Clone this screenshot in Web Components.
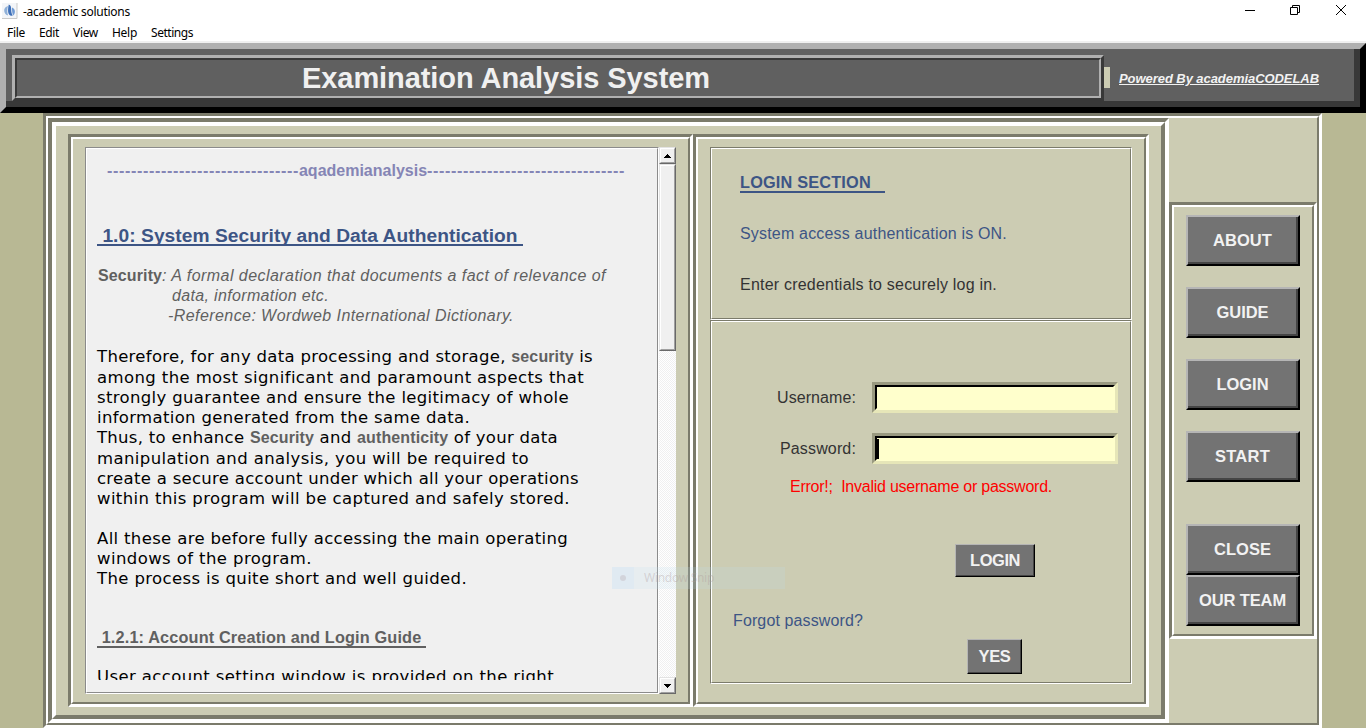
<!DOCTYPE html>
<html lang="en">
<head>
<meta charset="utf-8">
<title>-academic solutions</title>
<style>
html,body{margin:0;height:728px;overflow:hidden;background:#b8b894}
body{font-family:"Liberation Sans",Arial,sans-serif}
</style>
</head>
<body>
<exam-app></exam-app>
<script>
const define = (name, html, setup) => customElements.define(name, class extends HTMLElement {
  constructor() {
    super();
    const t = document.createElement('template');
    t.innerHTML = html;
    this.attachShadow({mode: 'open'}).appendChild(t.content.cloneNode(true));
  }
  connectedCallback() { if (setup) setup(this); }
});

/* One line of text; "w" is its width in pixels, reached through letter spacing. */
define('text-line', `<style>
:host{display:block;height:20px;line-height:var(--lh,22px);white-space:pre}
span{display:inline-block;height:100%}
:host([underline]) span{height:auto;line-height:normal;position:relative;top:1px;border-bottom:2px solid;line-height:17px}
</style><span><slot></slot></span>`, el => {
  const w = +el.getAttribute('w');
  if (!w) return;
  const s = el.shadowRoot.querySelector('span');
  const n = el.textContent.length;
  let ls = 0;
  for (let k = 0; k < 5; k++) {
    ls += (w - s.getBoundingClientRect().width) / n;
    s.style.letterSpacing = ls + 'px';
  }
});

/* Etched frame: a dark line, then a white one. */
define('groove-frame', `<style>
:host{display:block;box-sizing:border-box;--o:3px;--i:2px;--d:#7b7b6b;--l:#fff}
.o,.i{box-sizing:border-box;height:100%;border-style:solid}
.o{border-width:var(--o);border-color:var(--d) var(--l) var(--l) var(--d)}
.i{border-width:var(--i);border-color:var(--l) var(--d) var(--d) var(--l);background:var(--fill,#ccccb3)}
</style><div class="o"><div class="i"><slot></slot></div></div>`);

define('raised-button', `<style>
:host{display:block;box-sizing:border-box;--b:2px;--lh:20px}
.o,button{box-sizing:border-box;height:100%;border-style:solid}
.o{border-width:var(--b);border-color:#b5b5b5 #000 #000 #b5b5b5}
button{display:block;width:100%;padding:0 0 0 1px;border-width:0 var(--b) var(--b) 0;border-color:#454545;background:#737373;color:#f2f2f2;font:bold 16.500px "Liberation Sans",Arial,sans-serif}
</style><div class="o"><button><slot></slot></button></div>`);

define('title-bar', `<style>
:host{display:block;height:43px;box-sizing:border-box;background:#fff;border-bottom:2px solid #f0f0f0;font:12px "Noto Sans",sans-serif;color:#000}
.top{display:flex;height:23px;align-items:center}
.top text-line{line-height:20px}
.top svg.app{margin:0 5px 0 2px}
.win{margin-left:auto;margin-right:19px;display:flex;gap:34px;height:21px;align-items:center;padding-bottom:3px}
.menu{display:flex;padding-left:7px;height:18px;line-height:18px}
.menu text-line{height:18px;line-height:19px}
</style>
<div class="top"><svg class="app" width="16" height="17" viewBox="0 0 16 17"><path d="M0 0h15v15H0z" fill="#f3f5f8"/><path d="M15 0v15.500H0" fill="none" stroke="#c9c9c9"/><path d="M6 3C3.500 3.500 2 5.500 2.200 8c.2 2.300 1.800 4 4 4.500C5 10 5 6 6 3z" fill="#8fb0d8"/><path d="M6.800 1.500c2 .7 2.400 2.500 2.400 5 0 2.500.5 4.500 1.500 6-2.500 1-4.400-1-4.600-4-.1-2.500.2-5 .7-7z" fill="#3f70b8"/><path d="M10 4.500c2 .8 3 2.500 2.900 4.500-.1 1.500-.8 2.800-1.700 3.500-1-2-1.300-5-1.200-8z" fill="#6f9ad4"/></svg>
<text-line w="107">-academic solutions</text-line>
<div class="win"><svg width="12" height="12"><path d="M2 6.500h10" stroke="#000"/></svg><svg width="12" height="12"><path d="M1.500 3.500h7v7h-7zM3.500 3V1.500h7v7H9" fill="none" stroke="#000"/></svg><svg width="12" height="12"><path d="M1 1l10 10M11 1L1 11" stroke="#000"/></svg></div></div>
<div class="menu"><text-line w="18" style="margin-right:14px">File</text-line><text-line w="20" style="margin-right:14px">Edit</text-line><text-line w="25" style="margin-right:14px">View</text-line><text-line w="25" style="margin-right:14px">Help</text-line><text-line w="42">Settings</text-line></div>`);

define('app-header', `<style>
:host{display:block;height:70px}
.o,.i{box-sizing:border-box;border-style:solid}
.o{height:70px;border-width:6px;border-color:#b0b0b0 #000 #000 #b0b0b0}
.i{height:58px;border-width:0 6px 6px 0;border-color:#383838;background:#606060;display:flex}
groove-frame{--d:#b0b0b0;--l:#383838;--fill:#606060;width:1092px;height:46px;margin:6px 0 0 6px;flex:none}
h1{margin:0;padding-left:285px;font-size:29px;color:#f0f0f0}
h1 text-line{height:36px;line-height:36px}
.chip{width:6px;height:21px;margin-top:18px;background:#ccccb3}
.by{margin:20px 0 0 9px;font:italic bold 13px "Liberation Sans",Arial,sans-serif;color:#f2f2f2;text-decoration:underline}
.by text-line{height:19px;line-height:19px}
</style><div class="o"><div class="i"><groove-frame><h1><text-line w="408">Examination Analysis System</text-line></h1></groove-frame><div class="chip"></div><div class="by"><text-line w="200"><u>Powered By academiaCODELAB</u></text-line></div></div></div>`);

define('scroll-rail', `<style>
:host{display:flex;flex-direction:column;width:17px;height:547px;background:repeating-conic-gradient(#fff 0 25%,#f0f0f0 0 50%) 0 0/2px 2px}
.b{box-sizing:border-box;border:1px solid;border-color:#e3e3e3 #696969 #696969 #e3e3e3;height:17px;flex:none}
.b>div{box-sizing:border-box;height:100%;border:1px solid;border-color:#fff #a0a0a0 #a0a0a0 #fff;background:#f0f0f0;display:flex;align-items:center;justify-content:center}
.thumb{height:187px}.down{margin-top:auto}
svg{display:block}
</style><div class="b"><div><svg width="7" height="4" shape-rendering="crispEdges"><path d="M3 0h1v1h1v1h1v1h1v1H0V3h1V2h1V1h1z"/></svg></div></div><div class="b thumb"><div></div></div><div class="b down"><div><svg width="7" height="4" shape-rendering="crispEdges"><path d="M0 0h7v1H6v1H5v1H4v1H3V3H2V2H1V1H0z"/></svg></div></div>`);

define('guide-reader', `<style>
:host{display:flex;padding:8px 0 0 12px}
groove-frame{--o:1px;--i:1px;--d:#8b8b8b;--fill:#f0f0f0;width:574px;height:547px}
.t{height:531px;overflow:hidden;padding-left:10px;font-size:16px}
.v{font:16.500px "DejaVu Sans",Verdana,sans-serif;color:#000}
b{font:bold 16px "Liberation Sans",Arial,sans-serif;color:#606060;letter-spacing:.12px}
i{font-style:normal;letter-spacing:0}
.it{color:#606060;font-style:italic}.it b{font-style:normal}
.p{margin-top:20px}.g{margin-top:1px}
</style><groove-frame><div class="t">
<text-line w="518" style="margin:11px 0 0 10px;color:#8585b5;font-weight:bold">--------------------------------<i>aqademianalysis</i>---------------------------------</text-line>
<text-line underline w="426" style="margin-top:44px;margin-bottom:21px;color:#3d5585;font-weight:bold;font-size:19.200px"> 1.0: System Security and Data Authentication </text-line>
<div class="it"><text-line w="508" style="margin-left:1px"><b>Security</b>: A formal declaration that documents a fact of relevance of</text-line>
<text-line w="157" style="margin-left:75px">data, information etc.</text-line>
<text-line w="346" style="margin-left:71px">-Reference: Wordweb International Dictionary.</text-line></div>
<div class="v" style="margin-top:21px"><text-line w="496">Therefore, for any data processing and storage, <b>security</b> is</text-line>
<text-line class="g" w="487">among the most significant and paramount aspects that</text-line>
<text-line w="472">strongly guarantee and ensure the legitimacy of whole</text-line>
<text-line w="373">information generated from the same data.</text-line>
<text-line w="461">Thus, to enhance <b>Security</b> and <b>authenticity</b> of your data</text-line>
<text-line class="g" w="432">manipulation and analysis, you will be required to</text-line>
<text-line w="482">create a secure account under which all your operations</text-line>
<text-line w="473">within this program will be captured and safely stored.</text-line>
<text-line class="p" w="471">All these are before fully accessing the main operating</text-line>
<text-line w="215">windows of the program.</text-line>
<text-line w="370">The process is quite short and well guided.</text-line></div>
<text-line underline w="329" style="margin-top:37px;color:#606060;font-weight:bold;font-size:16.300px"> 1.2.1: Account Creation and Login Guide </text-line>
<text-line class="v" w="457" style="margin-top:22px">User account setting window is provided on the right</text-line>
</div></groove-frame><scroll-rail></scroll-rail>`);

define('entry-field', `<style>
:host{display:block;width:246px;height:31px}
.o,input{box-sizing:border-box;border-style:solid}
.o{height:31px;border-width:3px;border-color:#999980 #e6e6b8 #e6e6b8 #999980;background:#ffffcc}
.k{box-sizing:border-box;height:25px;border:2px solid;border-color:#000 #ffc #ffc #000;display:flex;padding-top:1px}
input{width:100%;height:20px;border:0;background:none;outline:0;padding:0}
:host([caret]) input{border-left:2px solid #000}
</style><div class="o"><div class="k"><input aria-label="entry"></div></div>`);

define('login-panel', `<style>
:host{display:block;padding:8px 12px 0;font-size:16px;color:#333}
groove-frame{--o:1px;--i:1px;width:422px}
.a{height:173px}.b{height:364px}
.c{padding:21px 0 0 28px}
.blue{color:#3d5585}
.row{display:flex;justify-content:flex-end;padding-right:12px}
.row text-line{margin:5px 16px 0 0}
.err{color:#f00;margin:12px 0 0 78px}
raised-button{--b:1px}
</style><groove-frame class="a"><div class="c">
<text-line underline w="145" class="blue" style="font-weight:bold;font-size:16.300px">LOGIN SECTION   </text-line>
<text-line w="267" class="blue" style="margin-top:33px">System access authentication is ON.</text-line>
<text-line w="257" style="margin-top:31px">Enter credentials to securely log in.</text-line></div></groove-frame>
<groove-frame class="b"><div class="row" style="padding-top:60px"><text-line w="79">Username:</text-line><entry-field></entry-field></div>
<div class="row" style="padding-top:20px"><text-line w="76">Password:</text-line><entry-field caret></entry-field></div>
<text-line class="err" w="262">Error!;  Invalid username or password.</text-line>
<raised-button style="width:80px;height:33px;margin:48px 0 0 243px"><text-line w="50">LOGIN</text-line></raised-button>
<text-line class="blue" w="130" style="margin:33px 0 0 21px">Forgot password?</text-line>
<raised-button style="width:55px;height:35px;margin:9px 0 0 255px"><text-line w="32">YES</text-line></raised-button>
</groove-frame>`);

define('side-menu', `<style>
:host{display:block;width:148px;padding-top:84px}
groove-frame{height:437px}
nav{padding:8px 12px;display:grid;row-gap:21px}
raised-button{width:114px;height:51px}
.last{padding-top:21px}
</style><groove-frame><nav><raised-button><text-line w="59">ABOUT</text-line></raised-button><raised-button><text-line w="52">GUIDE</text-line></raised-button><raised-button><text-line w="52">LOGIN</text-line></raised-button><raised-button><text-line w="55">START</text-line></raised-button><div class="last"><raised-button><text-line w="57">CLOSE</text-line></raised-button><raised-button><text-line w="87">OUR TEAM</text-line></raised-button></div></nav></groove-frame>`);

define('snip-ghost', `<style>
:host{position:absolute;left:612px;top:567px;width:173px;height:22px;background:rgba(190,222,240,.19);display:flex;align-items:center;font:12px "Noto Sans",sans-serif;color:rgba(170,150,150,.34)}
.d{width:22px;height:22px;display:grid;place-items:center;background:rgba(200,225,250,.2);margin-right:10px}
.d i{width:6px;height:6px;border-radius:50%;background:rgba(190,180,185,.4)}
text-line{line-height:20px}
</style><span class="d"><i></i></span><text-line w="70">Window Snip</text-line>`);

define('exam-app', `<style>
:host{display:block;width:1366px;height:728px}
.outer{width:1279px;height:615px;margin-left:43px}
.row,.cols{display:flex}
.main{--o:4px;--i:4px;width:1121px;height:605px;flex:none}
.cols{padding:8px 12px}
.l,.r{--o:3px;--i:2px;height:573px;flex:none}
.l{width:625px}.r{width:456px}
</style><title-bar></title-bar><app-header></app-header>
<groove-frame class="outer"><div class="row"><groove-frame class="main"><div class="cols"><groove-frame class="l"><guide-reader></guide-reader></groove-frame><groove-frame class="r"><login-panel></login-panel></groove-frame></div></groove-frame><side-menu></side-menu></div></groove-frame><snip-ghost></snip-ghost>`);
</script>
</body>
</html>
